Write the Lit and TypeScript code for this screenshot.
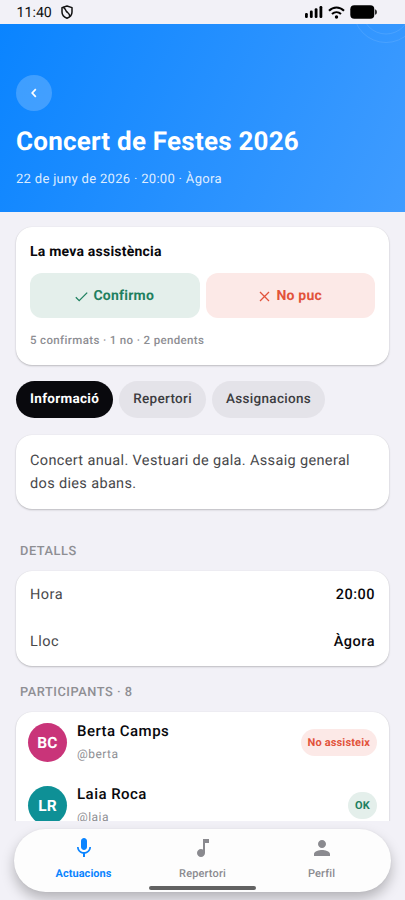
import { LitElement, html, css, svg } from "lit";
import { customElement, property } from "lit/decorators.js";

const icons = {
  mic: svg`<path d="M12 14c1.66 0 2.99-1.34 2.99-3L15 5c0-1.66-1.34-3-3-3S9 3.34 9 5v6c0 1.66 1.34 3 3 3zm5.3-3c0 3-2.54 5.1-5.3 5.1S6.7 14 6.7 11H5c0 3.41 2.72 6.23 6 6.72V21h2v-3.28c3.28-.48 6-3.3 6-6.72h-1.7z"/>`,
  note: svg`<path d="M12 3v10.55c-.59-.34-1.27-.55-2-.55-2.21 0-4 1.79-4 4s1.79 4 4 4 4-1.79 4-4V7h4V3h-6z"/>`,
  person: svg`<path d="M12 12c2.21 0 4-1.79 4-4s-1.79-4-4-4-4 1.79-4 4 1.79 4 4 4zm0 2c-2.67 0-8 1.34-8 4v2h16v-2c0-2.66-5.33-4-8-4z"/>`,
};

@customElement("status-bar")
class StatusBar extends LitElement {
  static styles = css`
    :host { display: flex; height: 24px; align-items: center; padding: 0 28px 0 16.5px; color: #111; }
    .time { font-size: 14.2px; line-height: 22px; padding-top: 1px; letter-spacing: 0; }
    .shield { width: 12px; height: 14px; margin-left: 9px; }
    .right { margin-left: auto; display: flex; align-items: center; }
    .signal { width: 18px; height: 12px; }
    .wifi { width: 17px; height: 13px; margin-left: 5px; }
    .battery { width: 27px; height: 14px; margin-left: 5px; }
    svg { display: block; }
  `;
  render() {
    return html`
      <span class="time">11:40</span>
      <svg class="shield" viewBox="0 0 12 14" fill="none" stroke="#111" stroke-width="1.5" stroke-linejoin="round">
        <path d="M6 1 11 2.6V7c0 3-2 5.2-5 6.2C3 12.2 1 10 1 7V2.6Z" />
        <path d="M2 2.2C4.5 3 4.2 5.2 5.6 6.6S8.6 8.5 8.8 11.2" />
      </svg>
      <div class="right">
        <svg class="signal" viewBox="0 0 18 12" fill="#000">
          <rect x="0" y="7" width="2.8" height="5" rx="1.2" /><rect x="4.9" y="4.5" width="2.8" height="7.5" rx="1.2" />
          <rect x="9.7" y="2.2" width="2.8" height="9.8" rx="1.2" /><rect x="14.5" y="0" width="2.8" height="12" rx="1.2" />
        </svg>
        <svg class="wifi" viewBox="0 0 17 13" fill="none" stroke="#000" stroke-width="2">
          <path d="M1 4.8C5.3.3 11.7.3 16 4.8" /><path d="M4 8C6.6 5.5 10.4 5.5 13 8" />
          <circle cx="8.5" cy="11" r="1.7" fill="#000" stroke="none" />
        </svg>
        <svg class="battery" viewBox="0 0 27 14">
          <rect x=".3" y=".3" width="24" height="13.4" rx="4" /><path d="M25.2 4.2Q26.8 4.6 26.8 7T25.2 9.8Z" />
        </svg>
      </div>
    `;
  }
}

@customElement("event-hero")
class EventHero extends LitElement {
  static styles = css`
    :host { display: block; position: relative; overflow: hidden; box-sizing: border-box; height: 188px; padding: 51px 16px 0;
      color: #fff; background: linear-gradient(115deg, #0a84ff, #409cff); }
    .rings { position: absolute; right: 0; top: 0; width: 60px; height: 24px; }
    .back { display: flex; align-items: center; justify-content: center; width: 36px; height: 36px; border-radius: 50%; background: rgba(255, 255, 255, 0.2); }
    .back svg { width: 12px; height: 12px; }
    h1 { margin: 14px 0 0; font-size: 26px; line-height: 35px; font-weight: 700; letter-spacing: 0.22px; white-space: nowrap; }
    p { margin: 10px 0 0; font-size: 13px; line-height: 20px; letter-spacing: 0.31px; color: rgba(255, 255, 255, 0.86); }
  `;
  render() {
    return html`
      <svg class="rings" viewBox="0 0 60 24" fill="none" stroke="#fff" stroke-opacity=".1">
        <circle cx="41" cy="-14" r="32.5" /><circle cx="41" cy="-14" r="24" />
      </svg>
      <div class="back">
        <svg viewBox="0 0 12 12" fill="none" stroke="#fff" stroke-width="1.7"><path d="M7.8 2.1 4.2 6l3.6 3.9" /></svg>
      </div>
      <h1>Concert de Festes 2026</h1>
      <p>22 de juny de 2026 · 20:00 · Àgora</p>
    `;
  }
}

@customElement("member-row")
class MemberRow extends LitElement {
  @property() initials = "";
  @property() name = "";
  @property() handle = "";
  @property() status = "";
  @property() tone = "";
  static styles = css`
    :host { display: flex; align-items: center; height: 63px; padding: 0 12px; }
    .avatar { width: 39px; height: 39px; border-radius: 50%; display: flex; align-items: center; justify-content: center;
      color: #fff; font-size: 15.5px; font-weight: 700; letter-spacing: 0.2px; }
    .avatar.pink { background: #c93479; }
    .avatar.teal { background: #0e9096; }
    .who { margin-left: 10px; flex: 1; }
    .name { font-size: 15px; line-height: 24px; font-weight: 500; letter-spacing: 0.47px; color: #08080c; }
    .handle { font-size: 12px; line-height: 23px; letter-spacing: 0.45px; color: #8e8e93; }
    .badge { height: 27px; line-height: 27px; padding: 0 7px; border-radius: 14px; font-size: 11px; font-weight: 700; letter-spacing: 0.15px; }
    .badge.pink { color: #e2533b; background: #fce9e7; }
    .badge.teal { color: #1f8060; background: #e4efeb; }
  `;
  render() {
    return html`
      <div class="avatar ${this.tone}">${this.initials}</div>
      <div class="who"><div class="name">${this.name}</div><div class="handle">${this.handle}</div></div>
      <div class="badge ${this.tone}">${this.status}</div>
    `;
  }
}

@customElement("tab-bar")
class TabBar extends LitElement {
  static styles = css`
    :host { display: flex; position: relative; box-sizing: border-box; width: 377px; height: 63px; margin: 0 14px; padding: 0 10px;
      border-radius: 32px; background: #fdfdfd; box-shadow: 0 7px 13px rgba(0, 0, 0, 0.25), 0 0 2px rgba(0, 0, 0, 0.06); }
    .item { flex: 1; display: flex; flex-direction: column; align-items: center; padding-top: 7px; color: #8a8a8f;
      font-size: 11px; font-weight: 500; letter-spacing: 0.15px; }
    .item.active { color: #0a84ff; font-weight: 700; letter-spacing: 0.05px; }
    .item svg { width: 24px; height: 24px; fill: currentColor; }
    .item span { line-height: 16px; margin-top: 6px; }
    .home { position: absolute; left: 135px; top: 57px; width: 107px; height: 4px; border-radius: 2px; background: #626262; }
  `;
  render() {
    return html`
      <div class="item active"><svg viewBox="0 0 24 24">${icons.mic}</svg><span>Actuacions</span></div>
      <div class="item"><svg viewBox="0 0 24 24">${icons.note}</svg><span>Repertori</span></div>
      <div class="item"><svg viewBox="0 0 24 24">${icons.person}</svg><span>Perfil</span></div>
      <div class="home"></div>
    `;
  }
}

@customElement("app-root")
class AppRoot extends LitElement {
  static styles = css`
    :host { display: flex; flex-direction: column; width: 405px; height: 900px; overflow: hidden; background: #f2f1f7;
      font-family: Roboto, "Liberation Sans", sans-serif; letter-spacing: 0.5px; text-rendering: geometricPrecision; }
    .content { height: 609px; box-sizing: border-box; overflow: hidden; padding: 15px 16px 0; }
    .card { background: #fff; border-radius: 16px; box-shadow: 0 1px 2px rgba(0, 0, 0, 0.22), 0 0 1px rgba(0, 0, 0, 0.1); }
    .attendance { height: 138px; box-sizing: border-box; padding: 15px 14px 0; }
    .heading { font-size: 14px; line-height: 21px; font-weight: 700; letter-spacing: 0.22px; color: #08080c; }
    .choices { display: flex; gap: 6px; margin-top: 10px; }
    .choice { flex: 1; box-sizing: border-box; height: 45px; padding-top: 1px; border-radius: 12px; display: flex; align-items: center; justify-content: center;
      gap: 5px; font-size: 14px; font-weight: 700; letter-spacing: 0.24px; }
    .choice svg { width: 13px; height: 13px; fill: none; stroke: currentColor; stroke-width: 1.3; }
    .yes { background: #e4efeb; color: #1f8060; }
    .no { background: #fce9e7; color: #e2533b; }
    .summary { margin-top: 13px; font-size: 11.5px; line-height: 18px; font-weight: 500; letter-spacing: 0.36px; color: #8e8e93; }
    .tabs { display: flex; gap: 6px; margin: 16.4px 0 16.6px; }
    .tab { height: 37px; line-height: 37px; padding: 0 14px; border-radius: 19px; font-size: 13.5px; font-weight: 500; letter-spacing: 0.32px; background: #e4e3e9; color: #3c3c40; }
    .tab.on { background: #09090d; color: #fff; font-weight: 700; letter-spacing: 0.31px; }
    .notes { height: 74px; box-sizing: border-box; padding: 14px; font-size: 14.5px; line-height: 23.5px; letter-spacing: 0.35px; color: #48484b; }
    .section { font-size: 12.8px; line-height: 18px; font-weight: 500; color: #8e8e93; padding-left: 4px; letter-spacing: 0.54px; }
    .section.details { margin: 34px 0 10px; }
    .section.people { margin: 18px 0 10px; }
    .row { display: flex; justify-content: space-between; align-items: center; height: 47.3px; padding: 0 14px; font-size: 14.5px; color: #48484b; }
    .row b { font-weight: 500; color: #08080c; }
    member-row { height: 62px; padding-bottom: 1px; }
    tab-bar { margin-top: 8px; }
  `;
  render() {
    return html`
      <status-bar></status-bar>
      <event-hero></event-hero>
      <main class="content">
        <section class="card attendance">
          <div class="heading">La meva assistència</div>
          <div class="choices">
            <div class="choice yes"><svg viewBox="0 0 13 13"><path d="M.8 7.2 4.2 10.6 12.2 2.6" /></svg>Confirmo</div>
            <div class="choice no"><svg viewBox="0 0 13 13"><path d="M2 2l9 9M11 2l-9 9" /></svg>No puc</div>
          </div>
          <div class="summary">5 confirmats · 1 no · 2 pendents</div>
        </section>
        <nav class="tabs">
          <div class="tab on">Informació</div>
          <div class="tab">Repertori</div>
          <div class="tab">Assignacions</div>
        </nav>
        <section class="card notes">Concert anual. Vestuari de gala. Assaig general dos dies abans.</section>
        <div class="section details">DETALLS</div>
        <section class="card">
          <div class="row"><span>Hora</span><b>20:00</b></div>
          <div class="row"><span>Lloc</span><b>Àgora</b></div>
        </section>
        <div class="section people">PARTICIPANTS · 8</div>
        <section class="card">
          <member-row initials="BC" name="Berta Camps" handle="@berta" status="No assisteix" tone="pink"></member-row>
          <member-row initials="LR" name="Laia Roca" handle="@laia" status="OK" tone="teal"></member-row>
        </section>
      </main>
      <tab-bar></tab-bar>
    `;
  }
}
